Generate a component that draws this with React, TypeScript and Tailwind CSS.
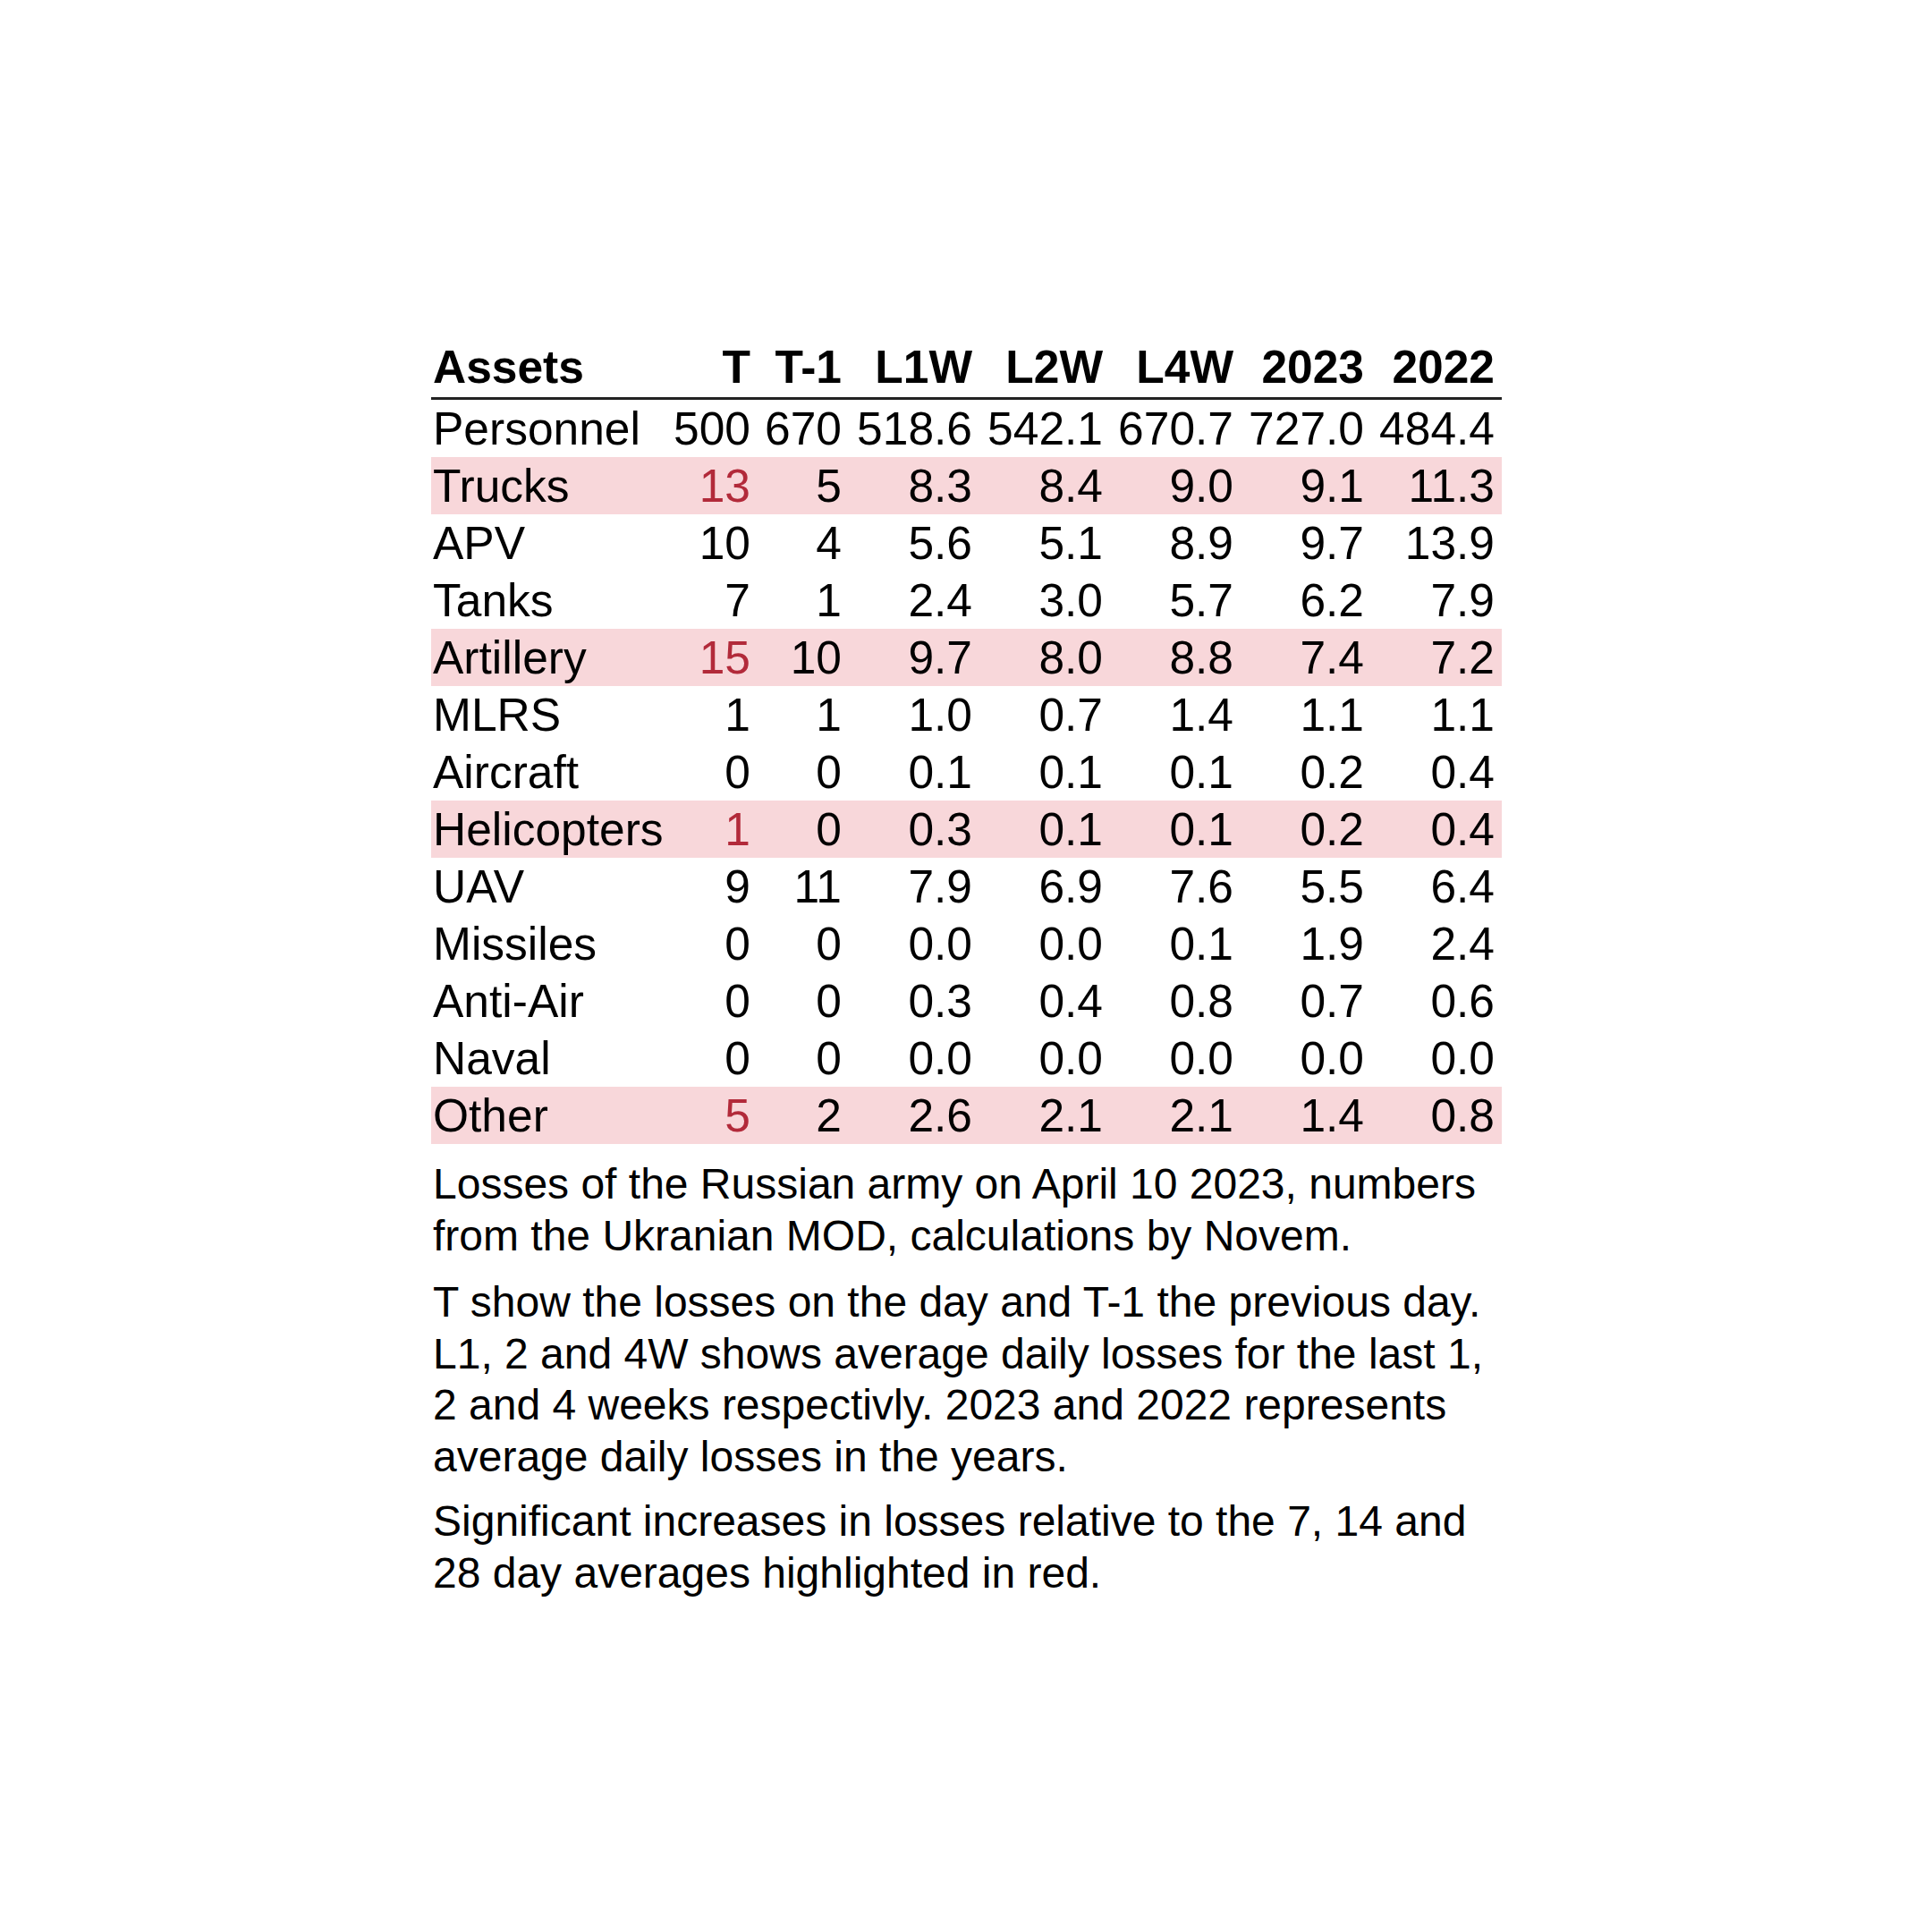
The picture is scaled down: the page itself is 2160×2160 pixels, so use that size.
const headers = ["T", "T-1", "L1W", "L2W", "L4W", "2023", "2022"];

interface Row {
  name: string;
  values: string[];
  highlight?: boolean;
}

const rows: Row[] = [
  { name: "Personnel", values: ["500", "670", "518.6", "542.1", "670.7", "727.0", "484.4"] },
  { name: "Trucks", values: ["13", "5", "8.3", "8.4", "9.0", "9.1", "11.3"], highlight: true },
  { name: "APV", values: ["10", "4", "5.6", "5.1", "8.9", "9.7", "13.9"] },
  { name: "Tanks", values: ["7", "1", "2.4", "3.0", "5.7", "6.2", "7.9"] },
  { name: "Artillery", values: ["15", "10", "9.7", "8.0", "8.8", "7.4", "7.2"], highlight: true },
  { name: "MLRS", values: ["1", "1", "1.0", "0.7", "1.4", "1.1", "1.1"] },
  { name: "Aircraft", values: ["0", "0", "0.1", "0.1", "0.1", "0.2", "0.4"] },
  { name: "Helicopters", values: ["1", "0", "0.3", "0.1", "0.1", "0.2", "0.4"], highlight: true },
  { name: "UAV", values: ["9", "11", "7.9", "6.9", "7.6", "5.5", "6.4"] },
  { name: "Missiles", values: ["0", "0", "0.0", "0.0", "0.1", "1.9", "2.4"] },
  { name: "Anti-Air", values: ["0", "0", "0.3", "0.4", "0.8", "0.7", "0.6"] },
  { name: "Naval", values: ["0", "0", "0.0", "0.0", "0.0", "0.0", "0.0"] },
  { name: "Other", values: ["5", "2", "2.6", "2.1", "2.1", "1.4", "0.8"], highlight: true },
];

// shared column template so header and body line up
const cols = "grid grid-cols-[268px_100px_102px_146px_146px_146px_146px_143px]";

export default function App() {
  return (
    <div className="w-[2160px] h-[2160px] bg-white pt-[378px] pl-[482px] text-black font-['Liberation_Sans',Arial,sans-serif]">
      <div className="w-[1197px]">
        {/* Header */}
        <div className={`${cols} pb-[2px] border-b-[3px] border-[#222222] text-[51.5px] leading-[64px] font-bold`}>
          <div className="pl-[2px] whitespace-nowrap">Assets</div>
          {headers.map((h, i) => (
            <div key={h} className={`${i === 6 ? "pr-[8px]" : "pr-[11px]"} text-right whitespace-nowrap`}>
              {h}
            </div>
          ))}
        </div>

        {/* Body */}
        {rows.map((r) => (
          <div
            key={r.name}
            className={`${cols} text-[51.5px] leading-[64px] ${r.highlight ? "bg-[#f8d7da]" : ""}`}
          >
            <div className="pl-[2px] whitespace-nowrap">{r.name}</div>
            {r.values.map((v, i) => (
              <div
                key={i}
                className={`${i === 6 ? "pr-[8px]" : "pr-[11px]"} text-right whitespace-nowrap ${r.highlight && i === 0 ? "text-[#b22a3a]" : ""}`}
              >
                {v}
              </div>
            ))}
          </div>
        ))}

        {/* Notes */}
        <div className="pl-[2px] text-[48px] leading-[57.5px]">
          <p className="mt-[16px]">
            Losses of the Russian army on April 10 2023, numbers from the Ukranian MOD, calculations by Novem.
          </p>
          <p className="mt-[17px]">
            T show the losses on the day and T-1 the previous day. L1, 2 and 4W shows average daily losses for the
            last 1, 2 and 4 weeks respectivly. 2023 and 2022 represents average daily losses in the years.
          </p>
          <p className="mt-[15px]">
            Significant increases in losses relative to the 7, 14 and 28 day averages highlighted in red.
          </p>
        </div>
      </div>
    </div>
  );
}
